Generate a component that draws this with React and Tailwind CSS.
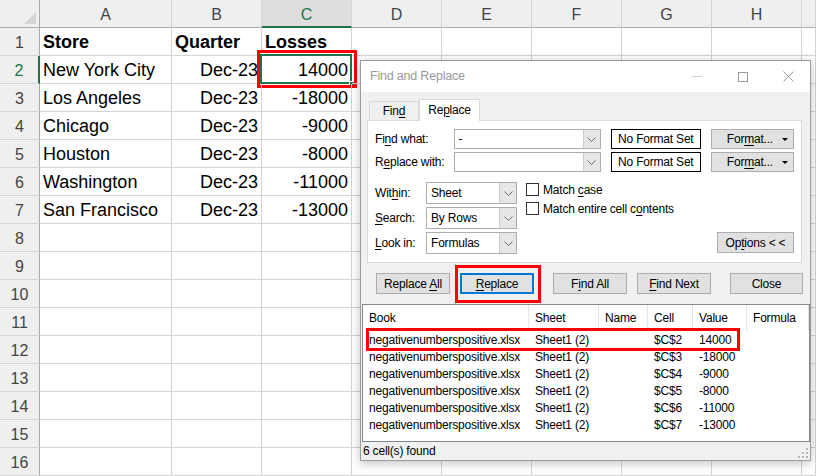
import React from 'react';

function U({ children }) {
  return <span className="underline decoration-1 underline-offset-[2px]">{children}</span>;
}

function Chevron() {
  return (
    <svg width="9" height="5" viewBox="0 0 9 5">
      <polyline points="0.5,0.5 4.5,4.5 8.5,0.5" fill="none" stroke="#6d6d6d" strokeWidth="1" />
    </svg>
  );
}

function Select({ children, combo }) {
  return (
    <div className={`h-full flex border border-[#adadad] bg-white ${combo ? 'w-[148px]' : 'w-[91px]'}`}>
      <div className="flex-1 pl-[4px] flex items-center">{children}</div>
      <div className="w-[17px] bg-[#e6e6e6] border-l border-[#cdcdcd] flex items-center justify-center">
        <Chevron />
      </div>
    </div>
  );
}

function Btn({ children, w, extra }) {
  return (
    <div className={`h-[21px] bg-[#e1e1e1] border border-[#adadad] flex items-center justify-center ${w} ${extra || ''}`}>
      {children}
    </div>
  );
}

function FormatBtn() {
  return (
    <div className="w-[83px] h-full bg-[#e1e1e1] border border-[#adadad] flex items-center justify-end pr-[5px]">
      <span>For<U>m</U>at...</span>
      <svg className="ml-[9px]" width="6" height="3" viewBox="0 0 6 3">
        <polygon points="0,0 6,0 3,3" fill="#000" />
      </svg>
    </div>
  );
}

function Checkbox({ children }) {
  return (
    <div className="flex items-center h-[13px] gap-[4px]">
      <div className="w-[13px] h-[13px] border border-[#333] bg-white" />
      <span>{children}</span>
    </div>
  );
}

const sheetRows = [
  ['Store', 'Quarter', 'Losses', true],
  ['New York City', 'Dec-23', '14000'],
  ['Los Angeles', 'Dec-23', '-18000'],
  ['Chicago', 'Dec-23', '-9000'],
  ['Houston', 'Dec-23', '-8000'],
  ['Washington', 'Dec-23', '-11000'],
  ['San Francisco', 'Dec-23', '-13000'],
];

const colLetters = ['A', 'B', 'C', 'D', 'E', 'F', 'G', 'H', ''];

const results = [
  ['$C$2', '14000'],
  ['$C$3', '-18000'],
  ['$C$4', '-9000'],
  ['$C$5', '-8000'],
  ['$C$6', '-11000'],
  ['$C$7', '-13000'],
];

function Sheet() {
  const cells = [];
  cells.push(
    <div key="corner" className="bg-[#efefef] border-r border-b border-[#ababab] relative">
      <svg className="absolute left-[24px] top-[12px]" width="12" height="12" viewBox="0 0 12 12">
        <polygon points="12,0 12,12 0,12" fill="#d6d6d6" />
      </svg>
    </div>
  );
  colLetters.forEach((l, i) => {
    const sel = l === 'C';
    cells.push(
      <div
        key={'h' + i}
        className={`flex items-center justify-center pt-[3px] text-[16px] ${
          sel
            ? 'bg-[#dedede] text-[#217346] border-b-2 border-b-[#217346] border-r border-r-[#d4d4d4]'
            : 'bg-[#efefef] text-[#444] border-b border-b-[#ababab] border-r border-r-[#d4d4d4]'
        }`}
      >
        {l}
      </div>
    );
  });
  for (let r = 1; r <= 16; r++) {
    const data = sheetRows[r - 1];
    const selRow = r === 2;
    cells.push(
      <div
        key={'r' + r}
        className={`flex items-center justify-center pt-[2px] text-[16px] bg-[#efefef] border-b border-b-[#d4d4d4] ${
          selRow ? 'text-[#217346] border-r-2 border-r-[#217346]' : 'text-[#444] border-r border-r-[#ababab]'
        }`}
      >
        {r}
      </div>
    );
    for (let c = 0; c < 9; c++) {
      let content = null;
      let align = 'justify-start pl-[3px]';
      let bold = false;
      if (data && c < 3) {
        content = data[c];
        bold = !!data[3];
        if (!bold && c > 0) align = 'justify-end pr-[3px]';
      }
      const isC2 = r === 2 && c === 2;
      cells.push(
        <div
          key={'c' + r + '-' + c}
          className={`relative flex items-center pt-[2px] whitespace-nowrap text-[18px] text-black border-r border-b border-[#d4d4d4] ${align} ${
            bold ? 'font-bold' : ''
          }`}
        >
          {content}
          {isC2 && (
            <>
              <div className="absolute left-[-2px] top-[-2px] w-[92px] h-[30px] border-2 border-[#217346]" />
              <div className="absolute right-[-4px] bottom-[-4px] w-[6px] h-[6px] bg-[#217346] border border-white" />
              <div className="absolute left-[-5px] top-[-6px] w-[100px] h-[38px] border-[3px] border-[#ff0000]" />
            </>
          )}
        </div>
      );
    }
  }
  return (
    <div className="grid grid-cols-[40px_132px_90px_90px_90px_90px_90px_90px_90px_1fr] auto-rows-[28px] w-[816px] h-[476px] bg-white overflow-hidden">
      {cells}
    </div>
  );
}

function Dialog() {
  return (
    <div className="absolute left-[360px] top-[60px] w-[451px] h-[401px] border border-[#9c9c9c] bg-[#f0f0f0] flex flex-col shadow-[0_2px_10px_rgba(0,0,0,0.25)] text-[12px] tracking-[-0.2px] text-black">
      <div className="h-[31px] bg-white flex items-center shrink-0">
        <span className="pl-[9px] text-[#9a9a9a] text-[12.5px]">Find and Replace</span>
        <div className="ml-auto flex h-full">
          <div className="w-[46px] h-full flex items-center justify-center">
            <div className="w-[10px] h-px bg-[#d0d0d0]" />
          </div>
          <div className="w-[46px] h-full flex items-center justify-center">
            <div className="w-[10px] h-[10px] border border-[#9b9b9b]" />
          </div>
          <div className="w-[44px] h-full flex items-center justify-center">
            <svg width="11" height="11" viewBox="0 0 11 11">
              <path d="M0.5 0.5 L10.5 10.5 M10.5 0.5 L0.5 10.5" stroke="#9b9b9b" strokeWidth="1" />
            </svg>
          </div>
        </div>
      </div>

      <div className="h-[28px] flex items-end pl-[8px] shrink-0">
        <div className="w-[50px] h-[19px] border border-b-0 border-[#d9d9d9] flex items-center justify-center">
          <span>Fin<U>d</U></span>
        </div>
        <div className="relative z-10 w-[61px] h-[22px] -mb-px bg-white border border-b-0 border-[#d9d9d9] flex items-center justify-center pb-[2px]">
          <span>Re<U>p</U>lace</span>
        </div>
      </div>

      <div className="ml-[6px] w-[435px] h-[143px] shrink-0 bg-white border border-[#d9d9d9] pt-[8px] pl-[7px] pr-[7px]">
        <div className="flex items-center h-[20px]">
          <div className="w-[79px]">Fi<U>n</U>d what:</div>
          <Select combo>-</Select>
          <div className="ml-[10px] w-[91px] h-full border border-black flex items-center justify-center">No Format Set</div>
          <div className="ml-[10px] h-full">
            <FormatBtn />
          </div>
        </div>
        <div className="flex items-center h-[20px] mt-[3px]">
          <div className="w-[79px]">R<U>e</U>place with:</div>
          <Select combo></Select>
          <div className="ml-[10px] w-[91px] h-full border border-black flex items-center justify-center">No Format Set</div>
          <div className="ml-[10px] h-full">
            <FormatBtn />
          </div>
        </div>

        <div className="flex mt-[10px]">
          <div className="flex flex-col gap-[3px]">
            <div className="flex items-center h-[22px]">
              <div className="w-[51px]">Wit<U>h</U>in:</div>
              <Select>Sheet</Select>
            </div>
            <div className="flex items-center h-[22px]">
              <div className="w-[51px]"><U>S</U>earch:</div>
              <Select>By Rows</Select>
            </div>
            <div className="flex items-center h-[22px]">
              <div className="w-[51px]"><U>L</U>ook in:</div>
              <Select>Formulas</Select>
            </div>
          </div>
          <div className="ml-[9px] pt-[1px] flex flex-col gap-[6px]">
            <Checkbox>Match <U>c</U>ase</Checkbox>
            <Checkbox>Match entire cell c<U>o</U>ntents</Checkbox>
          </div>
          <div className="ml-auto self-end mb-px">
            <Btn w="w-[77px]">
              <span>Op<U>t</U>ions &lt; &lt;</span>
            </Btn>
          </div>
        </div>
      </div>

      <div className="flex items-center mt-[10px] pl-[15px] h-[21px] shrink-0">
        <Btn w="w-[74px]">
          <span>Replace <U>A</U>ll</span>
        </Btn>
        <div className="relative ml-[10px]">
          <div className="w-[74px] h-[21px] bg-[#e1e1e1] border-2 border-[#0078d7] flex items-center justify-center">
            <span><U>R</U>eplace</span>
          </div>
          <div className="absolute left-[-5px] top-[-8px] w-[86px] h-[38px] border-[3px] border-[#ff0000]" />
        </div>
        <Btn w="w-[74px]" extra="ml-[19px]">
          <span>F<U>i</U>nd All</span>
        </Btn>
        <Btn w="w-[74px]" extra="ml-[10px]">
          <span><U>F</U>ind Next</span>
        </Btn>
        <Btn w="w-[73px]" extra="ml-[19px]">
          <span>Close</span>
        </Btn>
      </div>

      <div className="mt-[10px] ml-px w-[448px] h-[138px] shrink-0 border border-[#828790] bg-white relative">
        <div className="grid grid-cols-[166px_70px_49px_45px_54px_62px] h-[26px]">
          {['Book', 'Sheet', 'Name', 'Cell', 'Value', 'Formula'].map((h) => (
            <div key={h} className="border-r border-[#e5e5e5] flex items-center pl-[6px]">
              {h}
            </div>
          ))}
        </div>
        {results.map(([cell, val]) => (
          <div key={cell} className="grid grid-cols-[166px_70px_49px_45px_54px_62px] h-[17px] items-center whitespace-nowrap">
            <div className="pl-[6px]">negativenumberspositive.xlsx</div>
            <div className="pl-[6px]">Sheet1 (2)</div>
            <div className="pl-[6px]"></div>
            <div className="pl-[6px]">{cell}</div>
            <div className="pl-[6px]">{val}</div>
            <div></div>
          </div>
        ))}
        <div className="absolute left-[3px] top-[23px] w-[374px] h-[23px] border-[3px] border-[#ff0000]" />
      </div>

      <div className="flex-1 flex items-center pl-[2px] relative">
        <span>6 cell(s) found</span>
        <svg className="absolute right-[2px] bottom-[2px]" width="10" height="10" viewBox="0 0 10 10">
          <rect x="8" y="0" width="2" height="2" fill="#b5b5b5" />
          <rect x="4" y="4" width="2" height="2" fill="#b5b5b5" />
          <rect x="8" y="4" width="2" height="2" fill="#b5b5b5" />
          <rect x="0" y="8" width="2" height="2" fill="#b5b5b5" />
          <rect x="4" y="8" width="2" height="2" fill="#b5b5b5" />
          <rect x="8" y="8" width="2" height="2" fill="#b5b5b5" />
        </svg>
      </div>
    </div>
  );
}

export default function App() {
  return (
    <div className="relative w-[816px] h-[476px] overflow-hidden font-['Liberation_Sans',Arial,sans-serif]">
      <Sheet />
      <Dialog />
    </div>
  );
}
